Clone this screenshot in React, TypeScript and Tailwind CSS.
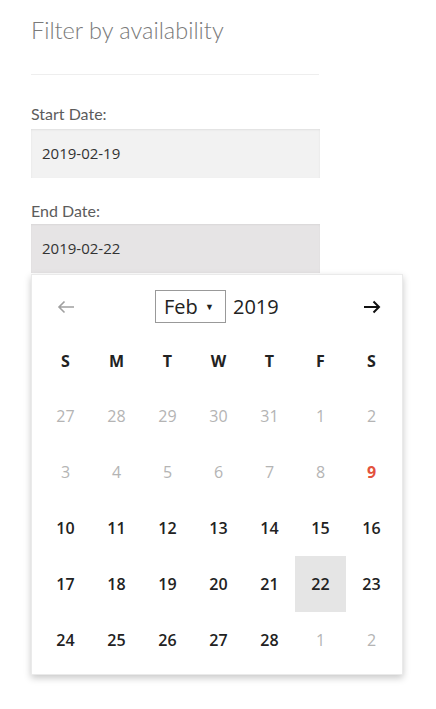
import { ChangeEvent, useState } from "react";

const weekdays = ["S", "M", "T", "W", "T", "F", "S"];

type Day = { n: number; muted?: boolean; today?: boolean };

const days: Day[] = [
  ...[27, 28, 29, 30, 31].map((n) => ({ n, muted: true })),
  ...[1, 2, 3, 4, 5, 6, 7, 8].map((n) => ({ n, muted: true })),
  { n: 9, today: true },
  ...Array.from({ length: 19 }, (_, i) => ({ n: i + 10 })),
  { n: 1, muted: true },
  { n: 2, muted: true },
];

function ArrowLeft({ className }: { className?: string }) {
  return (
    <svg width="18" height="14" viewBox="0 0 18 14" fill="none" className={className}>
      <path d="M17 7H2M7.5 1.5L2 7l5.5 5.5" stroke="currentColor" strokeWidth="1.6" />
    </svg>
  );
}

function ArrowRight({ className }: { className?: string }) {
  return (
    <svg width="18" height="14" viewBox="0 0 18 14" fill="none" className={className}>
      <path d="M1 7h15M10.5 1.5L16 7l-5.5 5.5" stroke="currentColor" strokeWidth="2" />
    </svg>
  );
}

export default function App() {
  const [selected, setSelected] = useState(22);
  const [month, setMonth] = useState("Feb");

  return (
    <div className="min-h-[709px] bg-white pl-[31px] pt-[16px] font-['Lato',sans-serif]">
      <h2 className="text-[23.5px] font-light leading-[28px] text-[#7a7a7a]">Filter by availability</h2>
      <div className="mt-[30px] h-px w-[288px] bg-[#eeeeee]" />

      <label className="mt-[29px] block text-[16px] leading-[20px] text-[#5c5c5c]">Start Date:</label>
      <div className="mt-[5px] flex h-[49px] w-[289px] items-center bg-[#f2f2f2] pl-[11px] font-['Open_Sans',sans-serif] text-[15px] text-[#333] shadow-[inset_0_1px_2px_rgba(0,0,0,0.08)]">
        2019-02-19
      </div>

      <label className="mt-[23px] block text-[16px] leading-[20px] text-[#5c5c5c]">End Date:</label>
      <div className="mt-[3px] flex h-[49px] w-[289px] items-center bg-[#e6e4e5] pl-[11px] font-['Open_Sans',sans-serif] text-[15px] text-[#333] shadow-[inset_0_1px_2px_rgba(0,0,0,0.06)]">
        2019-02-{selected}
      </div>

      <div className="mt-px w-[372px] border border-[#eaeaea] bg-white pb-[6px] pl-2 font-['Open_Sans',sans-serif] shadow-[0_3px_7px_rgba(0,0,0,0.22)]">
        <div className="flex h-[58px] items-center pt-[5px]">
          <button className="flex w-[51px] justify-center text-[#a0a0a0]">
            <ArrowLeft />
          </button>
          <div className="ml-[64px] flex items-center gap-[7px]">
            <div className="relative flex h-[33px] w-[71px] items-center border border-[#999] pl-[8px] text-[20px] text-[#222]">
              <select
                value={month}
                onChange={(e: ChangeEvent<HTMLSelectElement>) => setMonth(e.target.value)}
                className="w-full appearance-none bg-transparent outline-none"
              >
                {["Jan", "Feb", "Mar", "Apr", "May", "Jun", "Jul", "Aug", "Sep", "Oct", "Nov", "Dec"].map((m) => (
                  <option key={m}>{m}</option>
                ))}
              </select>
              <span className="pointer-events-none absolute right-[11px] top-[9px] text-[9px] text-[#222]">▼</span>
            </div>
            <span className="text-[20px] text-[#222]">2019</span>
          </div>
          <button className="ml-auto mr-[5px] flex w-[51px] justify-center text-[#111]">
            <ArrowRight />
          </button>
        </div>

        <div className="grid grid-cols-[repeat(7,51px)]">
          {weekdays.map((d, i) => (
            <div key={i} className="flex h-[55px] items-center justify-center text-[16px] font-bold text-[#222]">
              {d}
            </div>
          ))}
          {days.map((d, i) => {
            const isSel = !d.muted && !d.today && d.n === selected && i > 14;
            return (
              <button
                key={i}
                onClick={() => !d.muted && setSelected(d.n)}
                className={
                  "flex h-[56px] items-center justify-center text-[16px] " +
                  (d.muted
                    ? "font-normal text-[#b4b4b4]"
                    : d.today
                      ? "font-bold text-[#e3523d]"
                      : "font-semibold text-[#222]") +
                  (isSel ? " bg-[#e5e5e5]" : "")
                }
              >
                {d.n}
              </button>
            );
          })}
        </div>
      </div>
    </div>
  );
}
